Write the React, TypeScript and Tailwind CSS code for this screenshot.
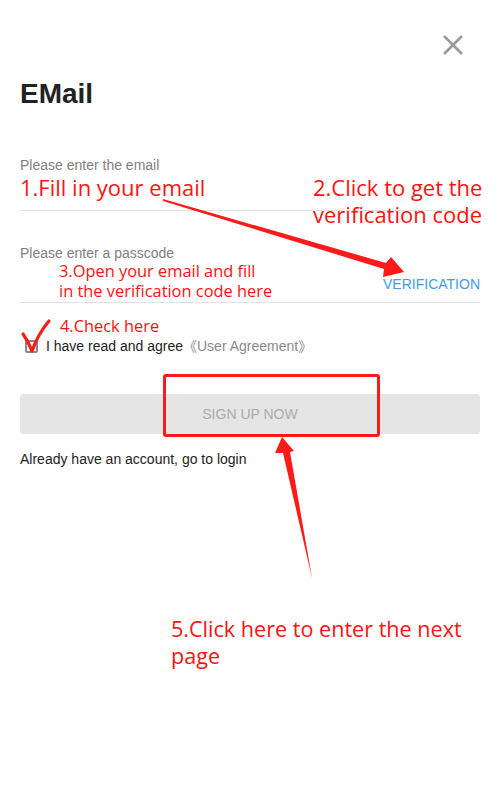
const Note = ({ className, children }: { className: string; children: React.ReactNode }) => (
  <div className={`absolute font-['Open_Sans','Noto_Sans',sans-serif] text-[#ff1212] whitespace-nowrap ${className}`}>
    {children}
  </div>
);

const App = () => {
  return (
    <div className="relative w-[500px] h-[812px] overflow-hidden bg-white font-['Liberation_Sans',Arial,sans-serif] text-[#222]">
      {/* close */}
      <div className="flex justify-end pt-[35px] pr-[37px]">
        <svg width="20" height="20" viewBox="0 0 20 20">
          <path d="M1 1 L19 19 M19 1 L1 19" stroke="#9a9a9a" strokeWidth="2.6" />
        </svg>
      </div>

      <div className="px-5">
        <h1 className="mt-[23px] text-[28px] leading-8 font-bold">EMail</h1>

        {/* email */}
        <div className="mt-[47px] border-b border-[#e2e2e2]">
          <div className="text-[14px] leading-4 text-[#808080]">Please enter the email</div>
          <div className="h-[37px]" />
        </div>

        {/* passcode */}
        <div className="mt-[34px] border-b border-[#e2e2e2]">
          <div className="text-[14px] leading-4 text-[#808080]">Please enter a passcode</div>
          <div className="flex justify-end pt-[15px] pb-[10px]">
            <span className="text-[14px] leading-4 text-[#3e9bf4]">VERIFICATION</span>
          </div>
        </div>

        {/* agreement */}
        <div className="mt-[35px] flex items-center text-[14px] leading-4">
          <span className="ml-[5px] mr-2 w-[13px] h-[13px] border-2 border-[#8a8a8a] rounded-[2px] bg-[#f4f4f4]" />
          <span>I have read and agree</span>
          <span className="text-[#8a8a8a] font-['Liberation_Sans','Noto_Sans_CJK_SC',sans-serif]">《User Agreement》</span>
        </div>

        <button className="mt-10 w-full h-10 rounded-[3px] bg-[#e5e5e5] text-[14px] text-[#ababab]">
          SIGN UP NOW
        </button>

        <div className="mt-[17px] text-[14px] leading-4">Already have an account, go to login</div>
      </div>

      {/* annotations drawn over the screenshot */}
      <Note className="left-[20px] top-[174px] text-[22px] leading-[27px]">1.Fill in your email</Note>
      <Note className="left-[313px] top-[174px] text-[22px] leading-[27px]">
        2.Click to get the
        <br />
        verification code
      </Note>
      <Note className="left-[59px] top-[261px] text-[16.4px] leading-5">
        3.Open your email and fill
        <br />
        in the verification code here
      </Note>
      <Note className="left-[60px] top-[316px] text-[16.4px] leading-5">4.Check here</Note>
      <Note className="left-[171px] top-[615px] text-[21.6px] leading-[27px]">
        5.Click here to enter the next
        <br />
        page
      </Note>

      <div className="absolute left-[163px] top-[374px] w-[217px] h-[63px] border-[3px] border-[#ff1a1a] rounded-[3px]" />

      <svg className="absolute inset-0 pointer-events-none" width="500" height="812" viewBox="0 0 500 812">
        <path d="M163 199 L386 263 L391 257 L404 272 L383 277 L384 269 L163 201 Z" fill="#ff1a1a" />
        <path d="M312 578 L290 452 L294 451 L282 437 L275 453 L283 453 Z" fill="#ff1a1a" />
        <path d="M23 334 Q28 341 32 351 Q38 334 49 321" stroke="#ff1a1a" strokeWidth="3.2" fill="none" strokeLinecap="round" strokeLinejoin="round" />
      </svg>
    </div>
  );
};

export default App;
